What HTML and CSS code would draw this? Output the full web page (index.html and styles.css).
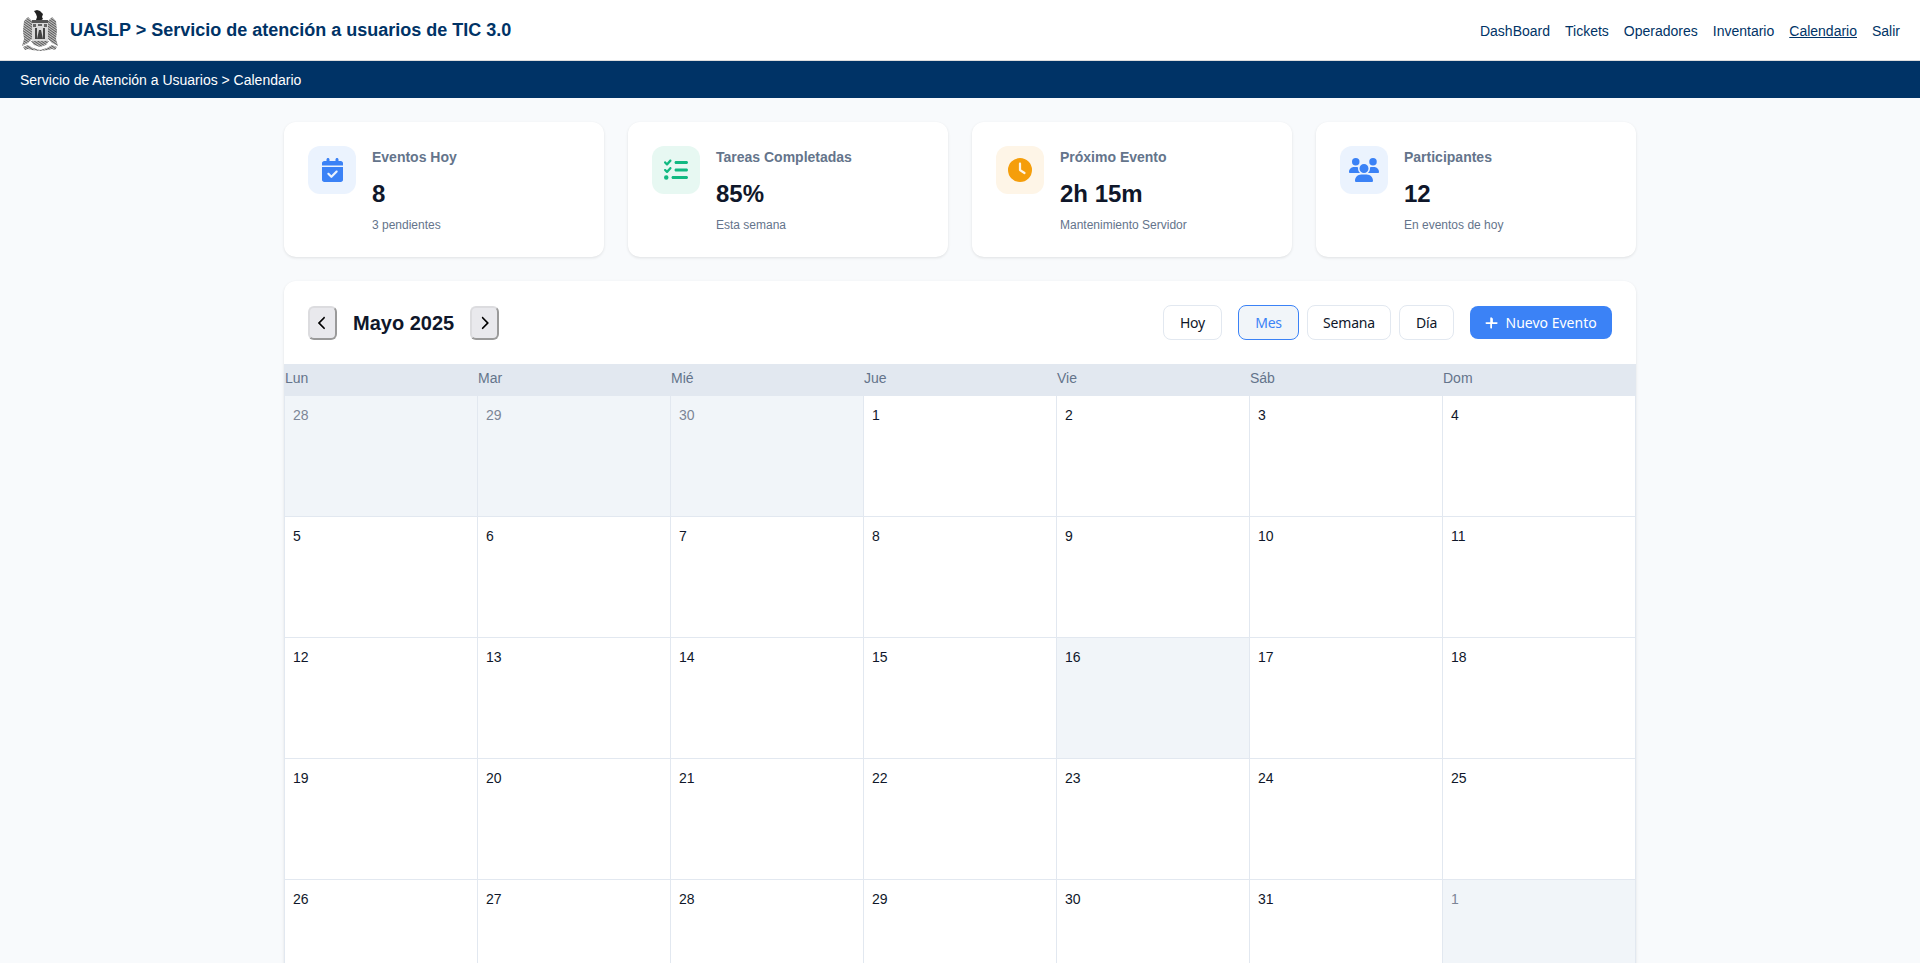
FILE: index.html
```html
<!DOCTYPE html>
<html lang="es">
<head>
    <meta charset="UTF-8">
    <meta name="viewport" content="width=device-width, initial-scale=1.0">
    <title>Calendario</title>
    <link rel="stylesheet" href="styles.css">
</head>
<body>
    <header class="topbar">
        <div class="brand">
            <svg class="logo" viewBox="0 0 40 48">
                <defs>
                    <pattern id="hatch" width="2" height="2" patternUnits="userSpaceOnUse" patternTransform="rotate(35)">
                        <rect width="2" height="2" fill="#c4c4c4"/>
                        <rect width="2" height="0.7" fill="#2e2e2e"/>
                    </pattern>
                </defs>
                <path d="M14 5l3-1 3 1 3 3-1 3 1 2-3 2-4-1 1-3-1-3z" fill="#222"/>
                <path d="M12 15L8 11 4 15 3 25 4 33 2 40 8 37 12 33zM28 15l4-4 4 4 1 10-1 8 2 7-6-3-4-4z" fill="url(#hatch)"/>
                <rect x="12" y="14" width="16" height="3" fill="#555"/>
                <rect x="12" y="17" width="16" height="18" fill="#d8d8d8"/>
                <path d="M13 18h3v3h-3zM24 18h3v3h-3zM18 18h4v2h-4z" fill="#666"/>
                <path d="M15 22h2v11h-2zM23 22h2v11h-2zM19 24h2l2 9h-6z" fill="#444"/>
                <path d="M11 35h18l-3 4-6 2-6-2z" fill="url(#hatch)"/>
                <path d="M3 41l5-2 5 3 7 2 7-2 5-3 5 2-2 3-3-1-4 1-8 1-8-1-4-1-3 1z" fill="url(#hatch)"/>
            </svg>
            <span class="brand-title">UASLP &gt; Servicio de atención a usuarios de TIC 3.0</span>
        </div>
        <nav class="nav">
            <a href="#">DashBoard</a>
            <a href="#">Tickets</a>
            <a href="#">Operadores</a>
            <a href="#">Inventario</a>
            <a href="#" class="active">Calendario</a>
            <a href="#">Salir</a>
        </nav>
    </header>
    <div class="crumbs">Servicio de Atención a Usuarios &gt; Calendario</div>

    <main class="page">
        <section class="stats">
            <div class="stat">
                <div class="stat-icon blue">
                    <svg viewBox="0 0 448 512" class="ico"><path d="M128 0c17.7 0 32 14.3 32 32V64H288V32c0-17.7 14.3-32 32-32s32 14.3 32 32V64h48c26.5 0 48 21.5 48 48v48H0V112C0 85.5 21.5 64 48 64H96V32c0-17.7 14.3-32 32-32zM0 192H448V464c0 26.5-21.5 48-48 48H48c-26.5 0-48-21.5-48-48V192zM329 305c9.4-9.4 9.4-24.6 0-33.9s-24.6-9.4-33.9 0l-95 95-47-47c-9.4-9.4-24.6-9.4-33.9 0s-9.4 24.6 0 33.9l64 64c9.4 9.4 24.6 9.4 33.9 0L329 305z"/></svg>
                </div>
                <div>
                    <h3 class="stat-title">Eventos Hoy</h3>
                    <div class="stat-value">8</div>
                    <div class="stat-sub">3 pendientes</div>
                </div>
            </div>
            <div class="stat">
                <div class="stat-icon green">
                    <svg viewBox="0 0 512 512" class="ico"><path d="M152.1 38.2c9.9 8.9 10.7 24 1.8 33.9l-72 80c-4.4 4.9-10.6 7.8-17.2 7.9s-12.9-2.4-17.6-7L7 113C-2.3 103.6-2.3 88.4 7 79s24.6-9.4 33.9 0l22.1 22.1 55.1-61.2c8.9-9.9 24-10.7 33.9-1.8zm0 160c9.9 8.9 10.7 24 1.8 33.9l-72 80c-4.4 4.9-10.6 7.8-17.2 7.9s-12.9-2.4-17.6-7L7 273c-9.4-9.4-9.4-24.6 0-33.9s24.6-9.4 33.9 0l22.1 22.1 55.1-61.2c8.9-9.9 24-10.7 33.9-1.8zM224 96c0-17.7 14.3-32 32-32H480c17.7 0 32 14.3 32 32s-14.3 32-32 32H256c-17.7 0-32-14.3-32-32zm0 160c0-17.7 14.3-32 32-32H480c17.7 0 32 14.3 32 32s-14.3 32-32 32H256c-17.7 0-32-14.3-32-32zM160 416c0-17.7 14.3-32 32-32H480c17.7 0 32 14.3 32 32s-14.3 32-32 32H192c-17.7 0-32-14.3-32-32zM48 368a48 48 0 1 1 0 96 48 48 0 1 1 0-96z"/></svg>
                </div>
                <div>
                    <h3 class="stat-title">Tareas Completadas</h3>
                    <div class="stat-value">85%</div>
                    <div class="stat-sub">Esta semana</div>
                </div>
            </div>
            <div class="stat">
                <div class="stat-icon orange">
                    <svg viewBox="0 0 512 512" class="ico"><path d="M256 0a256 256 0 1 1 0 512A256 256 0 1 1 256 0zM232 120V256c0 8 4 15.5 10.7 20l96 64c11 7.4 25.9 4.4 33.3-6.7s4.4-25.9-6.7-33.3L280 243.2V120c0-13.3-10.7-24-24-24s-24 10.7-24 24z"/></svg>
                </div>
                <div>
                    <h3 class="stat-title">Próximo Evento</h3>
                    <div class="stat-value">2h 15m</div>
                    <div class="stat-sub">Mantenimiento Servidor</div>
                </div>
            </div>
            <div class="stat">
                <div class="stat-icon blue">
                    <svg viewBox="0 0 640 512" class="ico"><path d="M144 0a80 80 0 1 1 0 160A80 80 0 1 1 144 0zM512 0a80 80 0 1 1 0 160A80 80 0 1 1 512 0zM0 298.7C0 239.8 47.8 192 106.7 192h42.7c15.9 0 31 3.5 44.6 9.7c-1.3 7.2-1.9 14.7-1.9 22.3c0 38.2 16.8 72.5 43.3 96c-.2 0-.4 0-.7 0H21.3C9.6 320 0 310.4 0 298.7zM405.3 320c-.2 0-.4 0-.7 0c26.6-23.5 43.3-57.8 43.3-96c0-7.6-.7-15-1.9-22.3c13.6-6.3 28.7-9.7 44.6-9.7h42.7C592.2 192 640 239.8 640 298.7c0 11.8-9.6 21.3-21.3 21.3H405.3zM224 224a96 96 0 1 1 192 0 96 96 0 1 1 -192 0zM128 485.3C128 411.7 187.7 352 261.3 352H378.7C452.3 352 512 411.7 512 485.3c0 14.7-11.9 26.7-26.7 26.7H154.7c-14.7 0-26.7-11.9-26.7-26.7z"/></svg>
                </div>
                <div>
                    <h3 class="stat-title">Participantes</h3>
                    <div class="stat-value">12</div>
                    <div class="stat-sub">En eventos de hoy</div>
                </div>
            </div>
        </section>

        <section class="calendar">
            <div class="cal-head">
                <div class="cal-month">
                    <button class="arrow"><svg viewBox="0 0 320 512" class="chev"><path d="M9.4 233.4c-12.5 12.5-12.5 32.8 0 45.3l192 192c12.5 12.5 32.8 12.5 45.3 0s12.5-32.8 0-45.3L77.3 256 246.6 86.6c12.5-12.5 12.5-32.8 0-45.3s-32.8-12.5-45.3 0l-192 192z"/></svg></button>
                    <h2>Mayo 2025</h2>
                    <button class="arrow"><svg viewBox="0 0 320 512" class="chev"><path d="M310.6 233.4c12.5 12.5 12.5 32.8 0 45.3l-192 192c-12.5 12.5-32.8 12.5-45.3 0s-12.5-32.8 0-45.3L242.7 256 73.4 86.6c-12.5-12.5-12.5-32.8 0-45.3s32.8-12.5 45.3 0l192 192z"/></svg></button>
                </div>
                <div class="cal-actions">
                    <button class="btn btn-hoy">Hoy</button>
                    <div class="views">
                        <button class="btn btn-mes selected">Mes</button>
                        <button class="btn btn-semana">Semana</button>
                        <button class="btn btn-dia">Día</button>
                    </div>
                    <button class="btn-new"><svg viewBox="0 0 448 512" class="plus"><path d="M256 80c0-17.7-14.3-32-32-32s-32 14.3-32 32V224H48c-17.7 0-32 14.3-32 32s14.3 32 32 32H192V432c0 17.7 14.3 32 32 32s32-14.3 32-32V288H432c17.7 0 32-14.3 32-32s-14.3-32-32-32H288V80z"/></svg>Nuevo Evento</button>
                </div>
            </div>
            <div class="grid">
                <div class="weekday">Lun</div>
                <div class="weekday">Mar</div>
                <div class="weekday">Mié</div>
                <div class="weekday">Jue</div>
                <div class="weekday">Vie</div>
                <div class="weekday">Sáb</div>
                <div class="weekday">Dom</div>

                <div class="day other">28</div>
                <div class="day other">29</div>
                <div class="day other">30</div>
                <div class="day">1</div>
                <div class="day">2</div>
                <div class="day">3</div>
                <div class="day">4</div>

                <div class="day">5</div>
                <div class="day">6</div>
                <div class="day">7</div>
                <div class="day">8</div>
                <div class="day">9</div>
                <div class="day">10</div>
                <div class="day">11</div>

                <div class="day">12</div>
                <div class="day">13</div>
                <div class="day">14</div>
                <div class="day">15</div>
                <div class="day today">16</div>
                <div class="day">17</div>
                <div class="day">18</div>

                <div class="day">19</div>
                <div class="day">20</div>
                <div class="day">21</div>
                <div class="day">22</div>
                <div class="day">23</div>
                <div class="day">24</div>
                <div class="day">25</div>

                <div class="day">26</div>
                <div class="day">27</div>
                <div class="day">28</div>
                <div class="day">29</div>
                <div class="day">30</div>
                <div class="day">31</div>
                <div class="day other">1</div>
            </div>
        </section>
    </main>
</body>
</html>
```

FILE: styles.css
```css
* {
    margin: 0;
    padding: 0;
    box-sizing: border-box;
}

body {
    font-family: "Liberation Sans", Arial, sans-serif;
    font-size: 14px;
    line-height: 1.6;
    color: #0f172a;
    background-color: #f8fafc;
}

/* top bar */
.topbar {
    height: 61px;
    padding: 0 20px;
    display: flex;
    align-items: center;
    justify-content: space-between;
    background-color: #fff;
    border-bottom: 1px solid #ddd;
}

.brand {
    display: flex;
    align-items: center;
    gap: 10px;
}

.logo {
    width: 40px;
    height: 48px;
}

.brand-title {
    font-size: 18px;
    font-weight: bold;
    color: #003366;
}

.nav {
    display: flex;
    gap: 15px;
    padding-top: 2px;
}

.nav a {
    color: #003366;
    text-decoration: none;
}

.nav a.active {
    text-decoration: underline;
}

.crumbs {
    height: 37px;
    padding: 1px 20px 0;
    display: flex;
    align-items: center;
    color: #fff;
    background-color: #003366;
}

/* content */
.page {
    width: 1352px;
    margin: 0 auto;
    padding-top: 24px;
}

.stats {
    display: grid;
    grid-template-columns: repeat(4, 1fr);
    gap: 24px;
    margin-bottom: 24px;
}

.stat {
    height: 135px;
    padding: 24px;
    display: flex;
    gap: 16px;
    background-color: #fff;
    border-radius: 12px;
    box-shadow: 0 1px 3px rgba(0, 0, 0, 0.1);
}

.stat-icon {
    width: 48px;
    height: 48px;
    flex-shrink: 0;
    display: flex;
    align-items: center;
    justify-content: center;
    border-radius: 12px;
}

.ico {
    height: 24px;
    fill: currentColor;
}

.blue {
    color: #3b82f6;
    background-color: #ebf3fe;
}

.green {
    color: #10b981;
    background-color: #e7f8f2;
}

.orange {
    color: #f59e0b;
    background-color: #fef5e7;
}

.stat-title {
    font-size: 14px;
    font-weight: bold;
    line-height: 22px;
    color: #64748b;
    margin-bottom: 9px;
}

.stat-value {
    font-size: 24px;
    font-weight: bold;
    line-height: 34px;
    margin-bottom: 5px;
}

.stat-sub {
    font-size: 12px;
    line-height: 18px;
    color: #64748b;
}

/* calendar */
.calendar {
    background-color: #fff;
    border-radius: 12px;
    box-shadow: 0 1px 3px rgba(0, 0, 0, 0.1);
    overflow: hidden;
}

.cal-head {
    height: 83px;
    padding: 0 24px;
    display: flex;
    align-items: center;
    justify-content: space-between;
}

.cal-month {
    display: flex;
    align-items: center;
    gap: 16px;
}

.cal-month h2 {
    font-size: 20px;
    line-height: 32px;
}

.arrow {
    width: 29px;
    height: 34px;
    display: flex;
    align-items: center;
    justify-content: center;
    background-color: #e9e9ed;
    border: 2px solid;
    border-color: #dcdcdf #9a9a9a #9a9a9a #dcdcdf;
    border-radius: 6px;
}

.chev {
    height: 14px;
}

.cal-actions {
    display: flex;
    align-items: center;
    gap: 16px;
}

.views {
    display: flex;
    gap: 8px;
}

.btn {
    height: 35px;
    font-family: "Noto Sans", sans-serif;
    font-size: 14px;
    letter-spacing: -0.2px;
    color: #0f172a;
    background-color: #fff;
    border: 1px solid #e2e8f0;
    border-radius: 8px;
}

.btn-hoy { width: 59px; }
.btn-mes { width: 61px; }
.btn-semana { width: 84px; }
.btn-dia { width: 55px; }

.btn.selected {
    color: #3b82f6;
    background-color: #f1f5f9;
    border-color: #3b82f6;
}

.btn-new {
    width: 142px;
    height: 33px;
    display: flex;
    align-items: center;
    justify-content: center;
    gap: 8px;
    font-family: "Noto Sans", sans-serif;
    font-size: 14px;
    color: #fff;
    background-color: #3b82f6;
    border: none;
    border-radius: 8px;
}

.plus {
    height: 14px;
    fill: #fff;
}

.grid {
    display: grid;
    grid-template-columns: repeat(7, 192px);
    gap: 1px;
    padding: 0 1px;
    background-color: #e2e8f0;
}

.weekday {
    height: 31px;
    padding-top: 3px;
    color: #64748b;
    background-color: #e2e8f0;
}

.day {
    height: 120px;
    padding: 8px;
    background-color: #fff;
}

.day.other {
    color: #7c8596;
    background-color: #f1f5f9;
}

.day.today {
    background-color: #f1f5f9;
}
```
